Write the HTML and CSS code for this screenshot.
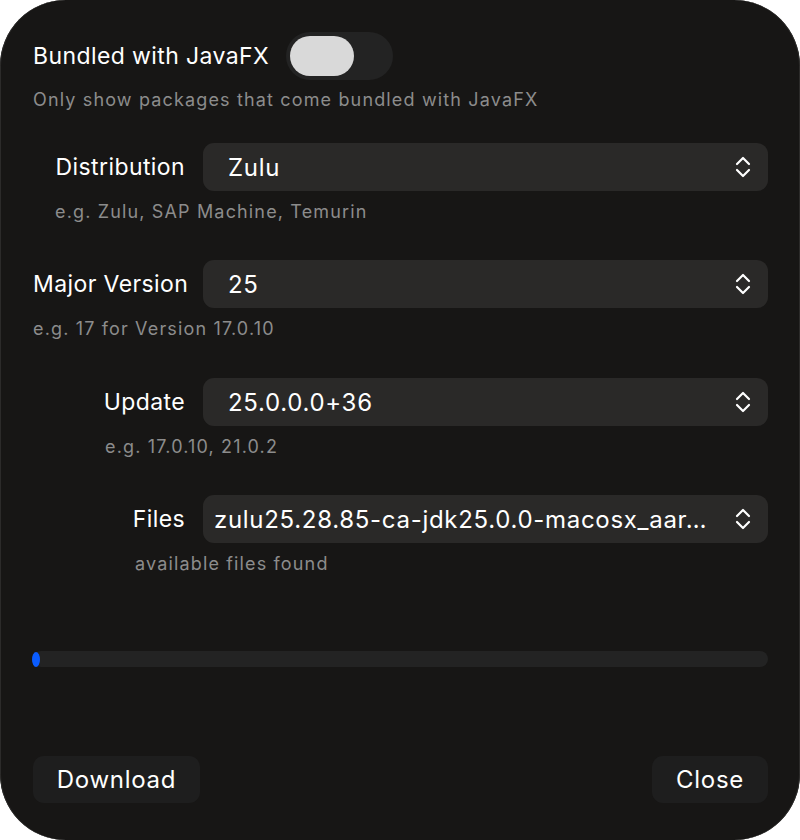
FILE: index.html
```html
<!DOCTYPE html>
<html>
<head>
<meta charset="utf-8">
<link rel="stylesheet" href="styles.css">
</head>
<body>
<div class="dialog">
  <div class="toggle-row">
    <span class="title">Bundled with JavaFX</span>
    <span class="switch"><span class="knob"></span></span>
  </div>
  <div class="desc">Only show packages that come bundled with JavaFX</div>

  <div class="field f-dist">
    <div class="field-row">
      <span class="label">Distribution</span>
      <div class="select"><span class="value">Zulu</span><svg class="chev" viewBox="0 0 16 22" width="16" height="22"><path d="M2 8 L8 2 L14 8 M2 14 L8 20 L14 14" fill="none" stroke="#fff" stroke-width="2.2" stroke-linecap="round" stroke-linejoin="round"/></svg></div>
    </div>
    <div class="hint">e.g. Zulu, SAP Machine, Temurin</div>
  </div>

  <div class="field f-major">
    <div class="field-row">
      <span class="label">Major Version</span>
      <div class="select"><span class="value">25</span><svg class="chev" viewBox="0 0 16 22" width="16" height="22"><path d="M2 8 L8 2 L14 8 M2 14 L8 20 L14 14" fill="none" stroke="#fff" stroke-width="2.2" stroke-linecap="round" stroke-linejoin="round"/></svg></div>
    </div>
    <div class="hint">e.g. 17 for Version 17.0.10</div>
  </div>

  <div class="field f-update">
    <div class="field-row">
      <span class="label">Update</span>
      <div class="select"><span class="value">25.0.0.0+36</span><svg class="chev" viewBox="0 0 16 22" width="16" height="22"><path d="M2 8 L8 2 L14 8 M2 14 L8 20 L14 14" fill="none" stroke="#fff" stroke-width="2.2" stroke-linecap="round" stroke-linejoin="round"/></svg></div>
    </div>
    <div class="hint">e.g. 17.0.10, 21.0.2</div>
  </div>

  <div class="field f-files">
    <div class="field-row">
      <span class="label">Files</span>
      <div class="select select-files"><span class="value">zulu25.28.85-ca-jdk25.0.0-macosx_aar…</span><svg class="chev" viewBox="0 0 16 22" width="16" height="22"><path d="M2 8 L8 2 L14 8 M2 14 L8 20 L14 14" fill="none" stroke="#fff" stroke-width="2.2" stroke-linecap="round" stroke-linejoin="round"/></svg></div>
    </div>
    <div class="hint">available files found</div>
  </div>

  <div class="progress"><span class="progress-fill"></span></div>

  <div class="buttons">
    <button class="btn btn-download">Download</button>
    <button class="btn btn-close">Close</button>
  </div>
</div>
</body>
</html>
```

FILE: styles.css
```css
html, body {
  margin: 0;
  padding: 0;
  background: #ffffff;
}

body {
  font-family: Inter, "Noto Sans", "Liberation Sans", sans-serif;
  color: #ffffff;
}

.dialog {
  box-sizing: border-box;
  width: 800px;
  height: 840px;
  background: #171615;
  border-radius: 66px;
  box-shadow: inset 1px 0 0 #2c2b2a, inset -1px 0 0 #2c2b2a;
  padding: 32px 32px 37px 33px;
  display: flex;
  flex-direction: column;
}

.toggle-row {
  display: flex;
  align-items: center;
  gap: 17px;
  height: 48px;
}

.title {
  font-size: 23px;
  letter-spacing: 0.4px;
}

.switch {
  box-sizing: border-box;
  width: 107px;
  height: 48px;
  border-radius: 24px;
  background: #232323;
  padding: 4px;
  display: flex;
}

.knob {
  width: 64px;
  height: 40px;
  border-radius: 20px;
  background: #d9d9d9;
}

.desc {
  margin-top: 9px;
  font-size: 18px;
  line-height: 22px;
  letter-spacing: 1.15px;
  color: #8c8c8c;
}

.field {
  margin-top: 32px;
}

.f-major {
  margin-top: 37px;
}

.f-update {
  margin-top: 38px;
}

.f-files {
  margin-top: 37px;
}

.field-row {
  display: grid;
  grid-template-columns: 152px minmax(0, 1fr);
  column-gap: 18px;
  align-items: center;
}

.label {
  text-align: right;
  font-size: 23px;
  letter-spacing: 0.4px;
  white-space: nowrap;
}

.select {
  box-sizing: border-box;
  height: 48px;
  border-radius: 11px;
  background: #2a2928;
  display: flex;
  align-items: center;
  padding: 0 17px 0 25px;
  gap: 18px;
  min-width: 0;
}

.select-files {
  padding-left: 11px;
}

.value {
  flex: 1;
  min-width: 0;
  font-size: 24px;
  letter-spacing: 0.7px;
  white-space: nowrap;
  overflow: hidden;
  text-overflow: ellipsis;
}

.chev {
  flex: none;
  width: 16px;
  height: 22px;
}

.hint {
  margin-top: 10px;
  font-size: 18px;
  line-height: 22px;
  letter-spacing: 1.15px;
  color: #8c8c8c;
}

.f-dist .hint { margin-left: 22px; }
.f-update .hint { margin-left: 72px; }
.f-files .hint { margin-left: 102px; }

.progress {
  margin-top: 76px;
  height: 16px;
  border-radius: 8px;
  background: #232323;
  display: flex;
  align-items: center;
}

.progress-fill {
  width: 8px;
  height: 15px;
  border-radius: 50%;
  background: #0a5cff;
  margin-left: -1px;
}

.buttons {
  margin-top: auto;
  display: flex;
  justify-content: space-between;
}

.btn {
  height: 47px;
  border: none;
  border-radius: 11px;
  background: #1e1e1e;
  color: #ffffff;
  font-family: inherit;
  font-size: 24px;
  letter-spacing: 0.7px;
  padding: 0;
}

.btn-download { width: 167px; }
.btn-close { width: 116px; }
```
